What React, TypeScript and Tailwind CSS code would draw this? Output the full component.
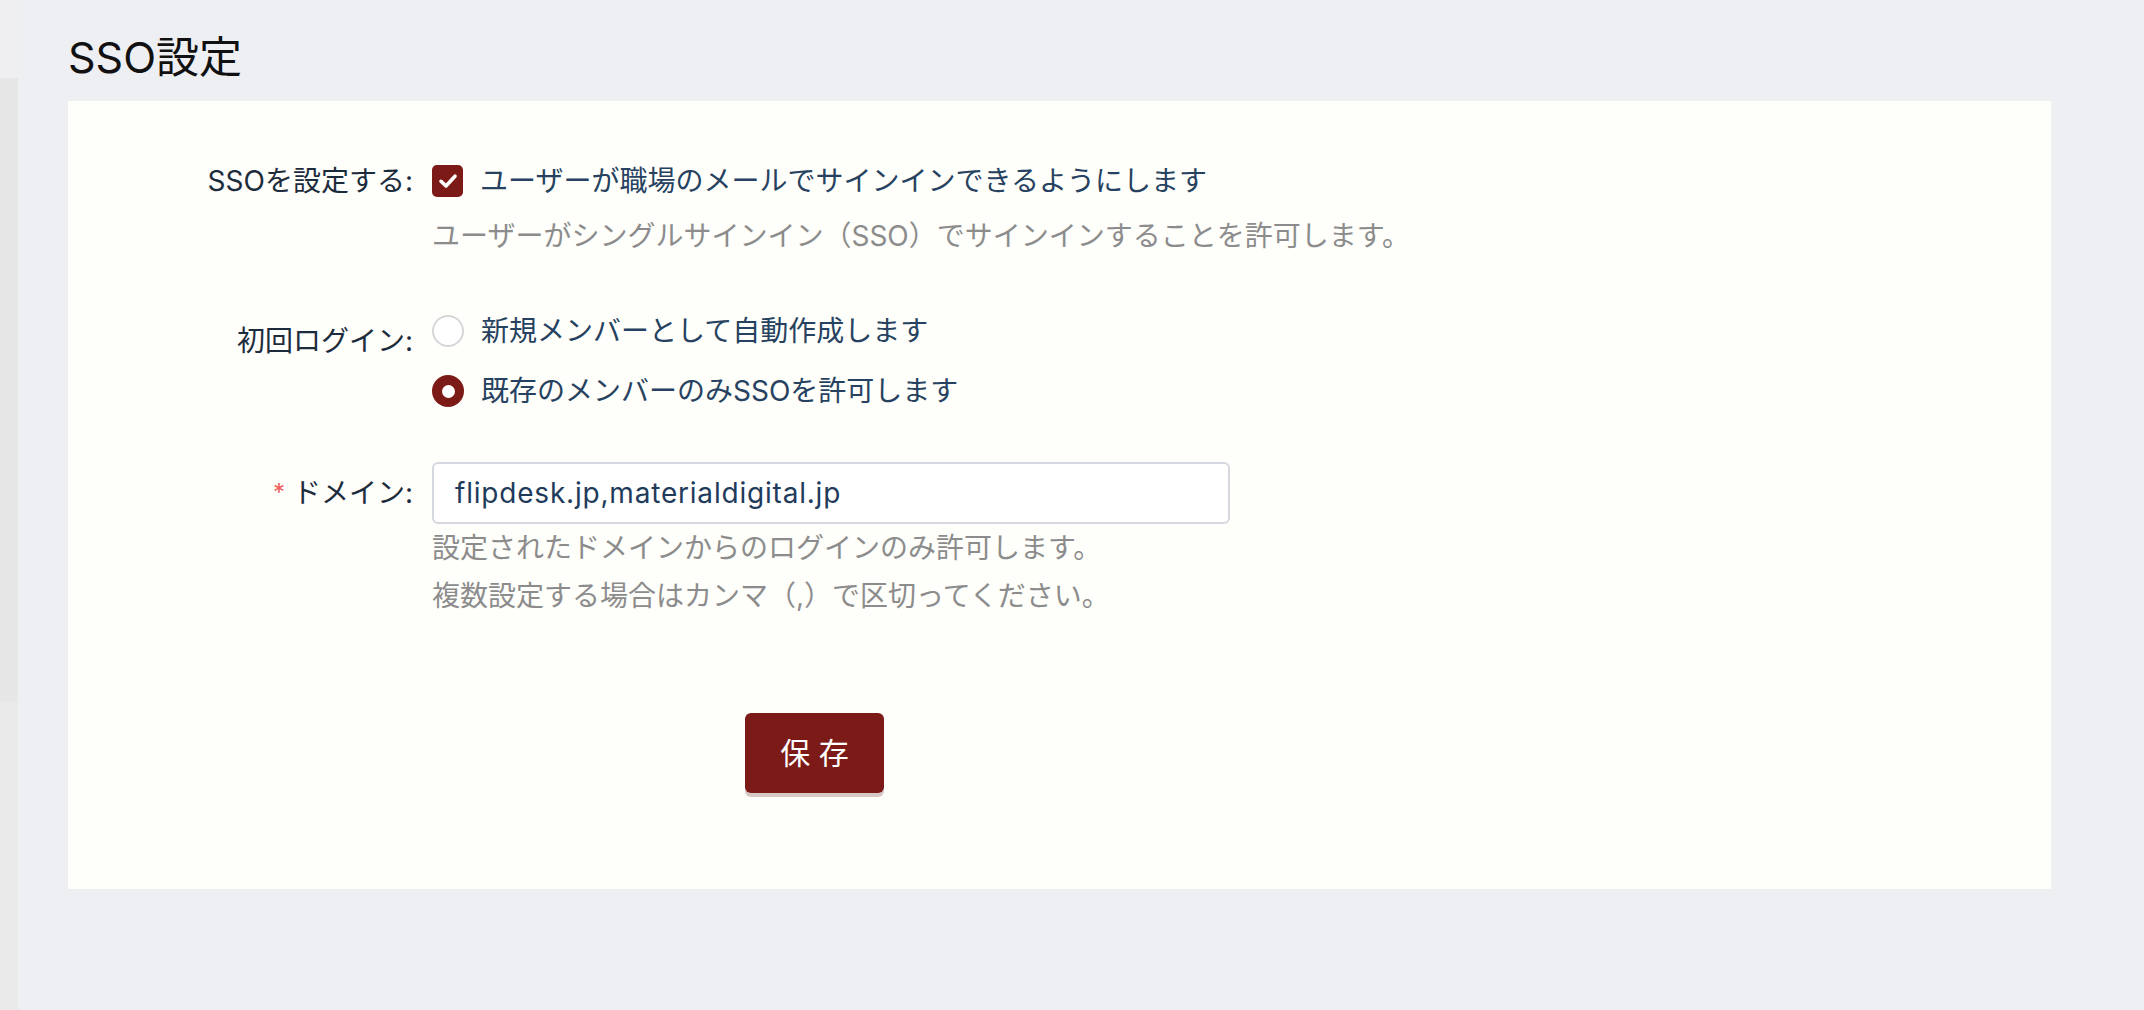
import React from "react";

function Checkbox() {
  return (
    <span className="flex h-[32px] w-[31px] shrink-0 items-center justify-center rounded-[5px] bg-[#7c1a18]">
      <svg width="20" height="16" viewBox="0 0 20 16" fill="none">
        <path d="M3 8.3 L8 13 L17 3.2" stroke="#ffffff" strokeWidth="3.6" strokeLinecap="round" strokeLinejoin="round" />
      </svg>
    </span>
  );
}

function Radio({ checked }: { checked: boolean }) {
  if (checked) {
    return (
      <span className="flex h-[32px] w-[32px] shrink-0 items-center justify-center rounded-full bg-[#7c1a18]">
        <span className="h-[13px] w-[13px] rounded-full bg-white" />
      </span>
    );
  }
  return <span className="h-[32px] w-[32px] shrink-0 rounded-full border-2 border-[#d6d6d8] bg-white" />;
}

export default function App() {
  const font = "font-['Inter','Noto_Sans_CJK_JP',sans-serif]";
  return (
    <div className={`flex min-h-[1010px] w-full bg-[#eeeff3] ${font}`}>
      <div className="flex w-[18px] shrink-0 flex-col">
        <div className="h-[78px] bg-[#efeff1]" />
        <div className="h-[624px] bg-[#e6e6e6]" />
        <div className="flex-1 bg-[#eaeaea]" />
      </div>
      <div className="flex-1 pl-[50px] pr-[93px]">
        <h1 className="mt-[33px] text-[43px] leading-[48px] font-normal text-[#111111]">SSO設定</h1>
        <div className="mt-[20px] bg-[#fefefa] pt-[61px] pb-[96px] text-[28px]">
          {/* Row 1 */}
          <div className="flex">
            <div className="w-[364px] shrink-0 pr-[19px] text-right leading-[38px] text-[#1d2c3c]">SSOを設定する:</div>
            <div className="flex flex-col">
              <div className="flex h-[38px] items-center gap-[17px]">
                <Checkbox />
                <span className="leading-[38px] text-[#264260]">ユーザーが職場のメールでサインインできるようにします</span>
              </div>
              <div className="mt-[16px] leading-[40px] text-[#8c8c8c]">ユーザーがシングルサインイン（SSO）でサインインすることを許可します。</div>
            </div>
          </div>

          {/* Row 2 */}
          <div className="mt-[55px] flex">
            <div className="w-[364px] shrink-0 pr-[19px] pt-[10px] text-right leading-[40px] text-[#1d2c3c]">初回ログイン:</div>
            <div className="flex flex-col gap-[20px]">
              <div className="flex h-[40px] items-center gap-[17px]">
                <Radio checked={false} />
                <span className="leading-[40px] text-[#264260]">新規メンバーとして自動作成します</span>
              </div>
              <div className="flex h-[40px] items-center gap-[17px]">
                <Radio checked={true} />
                <span className="leading-[40px] text-[#264260]">既存のメンバーのみSSOを許可します</span>
              </div>
            </div>
          </div>

          {/* Row 3 */}
          <div className="mt-[51px] flex">
            <div className="flex h-[62px] w-[364px] shrink-0 items-center justify-end pr-[19px] text-[#1d2c3c]">
              <span className="mr-[8px] text-[24px] text-[#f25c5c]">*</span>
              <span>ドメイン:</span>
            </div>
            <div className="flex flex-col">
              <div className="flex h-[62px] w-[798px] items-center rounded-[6px] border-2 border-[#d5d8de] bg-white px-[21px] tracking-[0.8px] text-[#1f3b5c]">
                flipdesk.jp,materialdigital.jp
              </div>
              <div className="leading-[48px] text-[#8c8c8c]">
                <div>設定されたドメインからのログインのみ許可します。</div>
                <div>複数設定する場合はカンマ（,）で区切ってください。</div>
              </div>
            </div>
          </div>

          {/* Save */}
          <div className="mt-[93px] pl-[677px]">
            <button className="flex h-[80px] w-[139px] items-center justify-center rounded-[6px] bg-[#7c1a18] text-[30px] text-white shadow-[0_4px_0_#d7c7c5]">
              保 存
            </button>
          </div>
        </div>
      </div>
    </div>
  );
}
